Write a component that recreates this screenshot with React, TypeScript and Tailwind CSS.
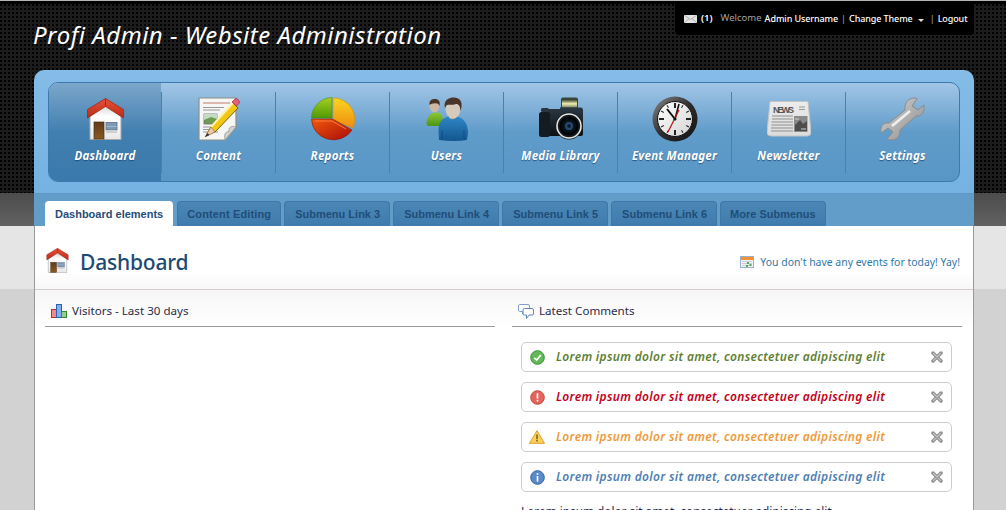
import type { ReactNode } from "react"

const trebuchet = "font-['Noto_Sans',sans-serif]"

function HouseIcon({ className }: { className?: string }) {
  return (
    <svg viewBox="0 0 37 42" className={className}>
      <defs>
        <linearGradient id="houseWall" x1="0" y1="0" x2="0" y2="1">
          <stop offset="0" stopColor="#cfcfcf" />
          <stop offset="0.35" stopColor="#ffffff" />
          <stop offset="1" stopColor="#e8e8e8" />
        </linearGradient>
        <linearGradient id="houseRoof" x1="0" y1="0" x2="0" y2="1">
          <stop offset="0" stopColor="#e8513a" />
          <stop offset="1" stopColor="#b92c16" />
        </linearGradient>
        <linearGradient id="houseDoor" x1="0" y1="0" x2="0" y2="1">
          <stop offset="0" stopColor="#5e3b1c" />
          <stop offset="1" stopColor="#8a5a24" />
        </linearGradient>
      </defs>
      <path d="M3 18 L18.5 6 L34 18 V41.5 H3 Z" fill="url(#houseWall)" stroke="#a8a8a8" />
      <rect x="7" y="24" width="10" height="17" fill="url(#houseDoor)" stroke="#4e3115" strokeWidth="0.7" />
      <rect x="19" y="24.5" width="11" height="7.5" fill="#7d99b8" stroke="#5c6f86" strokeWidth="0.8" />
      <rect x="19.5" y="28" width="10" height="0.8" fill="#aabcd0" />
      <rect x="19" y="32" width="11" height="3" fill="#cfcfcf" />
      <path d="M18.5 0.5 L36.5 11.5 V20 L18.5 8.5 L0.5 20 V11.5 Z" fill="url(#houseRoof)" stroke="#a02814" strokeWidth="0.8" />
      <path d="M18.5 0.5 V8.5" stroke="#97230f" strokeWidth="0.8" />
    </svg>
  )
}

function ContentIcon() {
  return (
    <svg viewBox="0 0 42 44" className="w-[42px] h-[44px]">
      <path d="M1 1 H38 V30 L27 43 H1 Z" fill="#f6f6f4" stroke="#8e8e88" strokeWidth="1.2" />
      <path d="M38 30 C33 28 30 31 31 35 C27 34 26 38 27 43 Z" fill="#d2d2ce" stroke="#9a9a94" strokeWidth="0.8" />
      <rect x="5" y="5" width="27" height="2" fill="#dcb9ae" />
      <path d="M5 10.5 H26 M5 13 H22 M5 30 H20 M5 32.5 H18 M5 35 H20" stroke="#8d8d8d" strokeWidth="0.9" />
      <rect x="6" y="17" width="13" height="10" fill="#6f9a52" stroke="#6e6e6e" strokeWidth="0.8" />
      <path d="M6 17 H19 V22 L13 20 L6 23 Z" fill="#c3dcc6" />
      <path d="M8 38.5 L13 30 L35 6 L40 11 L17 35 Z" fill="#f2c812" stroke="#7d5f08" strokeWidth="1" />
      <path d="M13 30 L35 6" stroke="#fff2a6" strokeWidth="2" />
      <path d="M7 40 L13 30 L17 35 Z" fill="#eec9a4" stroke="#8a6b50" strokeWidth="0.6" />
      <path d="M7 40 L9.5 36 L11.5 38 Z" fill="#333" />
      <path d="M34 5 L37 2 Q38 1 39.5 2 L41 4 Q42 5 41 6.5 L38.5 9 Z" fill="#e2607a" stroke="#a63a4e" strokeWidth="0.8" />
    </svg>
  )
}

function PieIcon() {
  return (
    <svg viewBox="0 0 44 44" className="w-[44px] h-[44px]">
      <defs>
        <linearGradient id="pieGreen" x1="0" y1="0" x2="0" y2="1">
          <stop offset="0" stopColor="#a8cf1e" />
          <stop offset="1" stopColor="#4f9a06" />
        </linearGradient>
        <linearGradient id="pieYellow" x1="0" y1="0" x2="0" y2="1">
          <stop offset="0" stopColor="#f9d520" />
          <stop offset="1" stopColor="#f08c10" />
        </linearGradient>
        <linearGradient id="pieRed" x1="0" y1="0" x2="1" y2="1">
          <stop offset="0" stopColor="#f2590c" />
          <stop offset="1" stopColor="#a80c08" />
        </linearGradient>
      </defs>
      <path d="M22 23 L22 1 A21.5 21.5 0 0 1 42 31 Z" fill="url(#pieYellow)" stroke="#d98a0c" strokeWidth="0.6" />
      <path d="M21 21 L21 0.5 A21 21 0 0 0 0.5 21 Z" fill="url(#pieGreen)" stroke="#4c8f0a" strokeWidth="0.6" />
      <path d="M0.5 22 H21.5 L41 33 A22 21.5 0 0 1 0.5 22 Z" fill="url(#pieRed)" stroke="#8e1508" strokeWidth="0.6" />
      <path d="M4 24 H21 L35 32" fill="none" stroke="#ff8a4a" strokeWidth="0.8" />
    </svg>
  )
}

function UsersIcon() {
  return (
    <svg viewBox="0 0 42 44" className="w-[42px] h-[44px]">
      <defs>
        <linearGradient id="userBlue" x1="0" y1="0" x2="0" y2="1">
          <stop offset="0" stopColor="#2f86c6" />
          <stop offset="1" stopColor="#12568f" />
        </linearGradient>
        <linearGradient id="userGreen" x1="0" y1="0" x2="0" y2="1">
          <stop offset="0" stopColor="#8ec63a" />
          <stop offset="1" stopColor="#4a9612" />
        </linearGradient>
      </defs>
      <path d="M0.5 27 C0.5 19 5 16 8 15.5 L12 15.5 C15 16 17 19 17 24 L14 29 H3 Q0.5 29 0.5 27 Z" fill="url(#userGreen)" />
      <ellipse cx="8.5" cy="9" rx="5" ry="6.5" fill="#cbb8a6" />
      <path d="M3.5 8 C3 3 6 2 9 2 C12.5 2 14.5 4 13.5 9 C12.5 6 10 6 8 6.5 C6 6.5 5 7 3.5 8 Z" fill="#4b3426" />
      <path d="M13 43 L12.5 34 C12.5 24 17 21 22 19.5 L31 19.5 C37 21 42 26 42 36 L41 43 Q28 45 13 43 Z" fill="url(#userBlue)" />
      <path d="M23 17 L23 21 Q27 24 31 20 L31 15 Z" fill="#b5a595" />
      <ellipse cx="27" cy="12" rx="7.5" ry="9.5" fill="#d6cabc" />
      <path d="M19 11 C17 3 23 0.5 28 0.5 C33 0.5 36.5 4 35.5 10 L34.5 14 C34 9 33 7 30 7 C26 8.5 22 7 20.5 8.5 Z" fill="#4a352a" />
      <path d="M16 43 L16 33 M38 43 L38 33" stroke="#0e4a7c" strokeWidth="0.8" />
    </svg>
  )
}

function CameraIcon() {
  return (
    <svg viewBox="0 0 44 44" className="w-[44px] h-[44px]">
      <defs>
        <linearGradient id="camBody" x1="0" y1="0" x2="0" y2="1">
          <stop offset="0" stopColor="#2a3842" />
          <stop offset="1" stopColor="#0c1116" />
        </linearGradient>
        <radialGradient id="camLens" cx="0.5" cy="0.5" r="0.5">
          <stop offset="0" stopColor="#22405e" />
          <stop offset="0.45" stopColor="#0b1620" />
          <stop offset="1" stopColor="#000" />
        </radialGradient>
        <linearGradient id="camFlash" x1="0" y1="0" x2="0" y2="1">
          <stop offset="0" stopColor="#4a5034" />
          <stop offset="0.5" stopColor="#f1eeb2" />
          <stop offset="1" stopColor="#7d8260" />
        </linearGradient>
      </defs>
      <path d="M22 11 L22 2 Q22 0.5 24 0.5 H37 Q39 0.5 39 2 L39 11 Z" fill="#39463f" />
      <rect x="23" y="3" width="15" height="7.5" fill="url(#camFlash)" />
      <path d="M8 14 Q8 12 10 12 H21 V10.5 H42 Q44 10.5 44 13 V37 Q44 39 42 39 H8 Z" fill="url(#camBody)" />
      <rect x="0" y="15" width="11" height="25" rx="2.5" fill="#141b21" />
      <rect x="2" y="11" width="8" height="4" rx="1.5" fill="#2a3540" />
      <circle cx="30" cy="29" r="13.5" fill="#161b1f" />
      <circle cx="30" cy="29" r="12" fill="none" stroke="#e6e6e6" strokeWidth="1.6" />
      <circle cx="30" cy="29" r="9.5" fill="url(#camLens)" />
      <circle cx="30" cy="29" r="4" fill="#234a70" />
      <circle cx="30" cy="29" r="1.8" fill="#0a1622" />
    </svg>
  )
}

function ClockIcon() {
  const ticks = [0, 30, 60, 90, 120, 150, 180, 210, 240, 270, 300, 330]
  return (
    <svg viewBox="0 0 46 46" className="w-[46px] h-[46px]">
      <defs>
        <linearGradient id="clockRing" x1="0" y1="0" x2="1" y2="1">
          <stop offset="0" stopColor="#8a8a8a" />
          <stop offset="0.5" stopColor="#2e2e2e" />
          <stop offset="1" stopColor="#111" />
        </linearGradient>
        <linearGradient id="clockFace" x1="0" y1="0" x2="1" y2="1">
          <stop offset="0" stopColor="#ffffff" />
          <stop offset="1" stopColor="#d4d4d4" />
        </linearGradient>
      </defs>
      <circle cx="23" cy="23" r="22.5" fill="url(#clockRing)" />
      <circle cx="23" cy="23" r="17.5" fill="url(#clockFace)" stroke="#111" />
      {ticks.map((t) => (
        <rect
          key={t}
          x={t % 90 === 0 ? 22 : 22.5}
          y="7"
          width={t % 90 === 0 ? 2 : 1}
          height={t % 90 === 0 ? 5 : 3}
          fill="#222"
          transform={`rotate(${t} 23 23)`}
        />
      ))}
      <path d="M23 23 L15 13" stroke="#111" strokeWidth="2" />
      <path d="M23 23 L27 8" stroke="#111" strokeWidth="1.6" />
      <path d="M27 14 L16 36" stroke="#c01818" strokeWidth="1.2" />
      <circle cx="23" cy="23" r="1.6" fill="#111" />
    </svg>
  )
}

function NewsIcon() {
  return (
    <svg viewBox="0 0 44 36" className="w-[44px] h-[36px]">
      <defs>
        <linearGradient id="newsPaper" x1="0" y1="0" x2="0" y2="1">
          <stop offset="0" stopColor="#ececec" />
          <stop offset="1" stopColor="#dcdcdc" />
        </linearGradient>
      </defs>
      <path d="M3 1 Q3 0.5 4 0.5 H40 Q41 0.5 41 1 L44 31 Q44 35 40 35 H4 Q0 35 0 31 Z" fill="url(#newsPaper)" stroke="#c4c4c4" />
      <text x="6" y="11.5" fontSize="9" fontWeight="700" fontFamily="'Liberation Sans',sans-serif" fill="#555" textLength="21">
        NEWS
      </text>
      <path d="M32 6 H38 M32 8.5 H38" stroke="#999" />
      <path d="M5 15 H26 M5 18 H26 M4.5 21 H26 M4.5 24 H26 M4 27 H26 M4 30 H26" stroke="#8f8f8f" />
      <rect x="27" y="15" width="13.5" height="16" fill="#8a8a8a" />
      <path d="M28 24 L33 19 L36 23 L40 20 V30 H28 Z" fill="#4d4d4d" />
      <path d="M28 18 H32 M34 28 H39" stroke="#cfcfcf" />
    </svg>
  )
}

function WrenchIcon() {
  return (
    <svg viewBox="0 0 45 44" className="w-[45px] h-[44px]">
      <defs>
        <linearGradient id="wrenchMetal" x1="0" y1="0" x2="1" y2="1">
          <stop offset="0" stopColor="#d6d6d6" />
          <stop offset="1" stopColor="#8c8c8c" />
        </linearGradient>
      </defs>
      <path
        d="M35 1 C28 1 24 6 25 13 L9 26 C3 25 0 30 1 36 L8 31 L13 35 L7 42 C14 45 21 41 20 33 L36 19 C41 20 45 15 44 8 L38 13 L32 9 L37 2 Z"
        fill="url(#wrenchMetal)"
        stroke="#8a8a8a"
      />
      <path d="M12 29 L30 14" stroke="#efefef" strokeWidth="2.5" />
    </svg>
  )
}

function MailIcon() {
  return (
    <svg viewBox="0 0 13 8" className="w-[13px] h-[8px] mr-[4px] shrink-0">
      <rect width="13" height="8" fill="#e4e4e4" />
      <path d="M0 0 L6.5 4.5 L13 0 M0 8 L5 3.5 M13 8 L8 3.5" stroke="#9a9a9a" strokeWidth="0.7" fill="none" />
    </svg>
  )
}

function BarsIcon() {
  return (
    <svg viewBox="0 0 16 14" className="w-[16px] h-[14px]">
      <rect x="0.5" y="5.5" width="5" height="8" fill="#f08a8a" stroke="#c02c2c" />
      <rect x="5.5" y="0.5" width="5" height="13" fill="#7fb0ea" stroke="#2b5fb8" />
      <rect x="10.5" y="7.5" width="5" height="6" fill="#92cc8e" stroke="#2f8a34" />
    </svg>
  )
}

function CommentsIcon() {
  return (
    <svg viewBox="0 0 16 15" className="w-[16px] h-[15px]">
      <path d="M1.5 0.5 H10 Q11.5 0.5 11.5 2 V6 Q11.5 7.5 10 7.5 H6 L4.5 10 V7.5 H1.5 Q0.5 7.5 0.5 6 V2 Q0.5 0.5 1.5 0.5 Z" fill="#fff" stroke="#7f9fc4" />
      <path d="M6.5 4.5 H14 Q15.5 4.5 15.5 6 V10 Q15.5 11 14 11 H11 L8.5 14.5 V11 H6.5 Q5 11 5 10 V6 Q5 4.5 6.5 4.5 Z" fill="#fff" stroke="#5f88b8" />
    </svg>
  )
}

function CalendarIcon() {
  return (
    <svg viewBox="0 0 14 12" className="w-[14px] h-[12px]">
      <rect x="0.5" y="0.5" width="13" height="11" fill="#f4f4f4" stroke="#9ab0c8" />
      <rect x="1" y="1" width="12" height="3" fill="#f09038" />
      <path d="M2 5.5 H12 M2 7.5 H12 M2 9.5 H12" stroke="#c4ccd4" />
      <rect x="7" y="6" width="2" height="2" fill="#57a85a" />
      <rect x="9.5" y="8" width="2" height="2" fill="#57a85a" />
      <rect x="6" y="9" width="2" height="2" fill="#57a85a" />
    </svg>
  )
}

function CloseIcon() {
  return (
    <svg viewBox="0 0 12 12" className="w-[12px] h-[12px]">
      <path d="M2 2 L10 10 M10 2 L2 10" stroke="#8e8e8e" strokeWidth="3.4" strokeLinecap="round" />
      <path d="M2.5 2.5 L9.5 9.5 M9.5 2.5 L2.5 9.5" stroke="#c4c4c4" strokeWidth="1.2" strokeLinecap="round" />
    </svg>
  )
}

function StatusIcon({ kind }: { kind: string }) {
  if (kind === "warning") {
    return (
      <svg viewBox="0 0 16 14" className="w-[16px] h-[14px]">
        <path d="M8 0.7 L15.5 13.3 H0.5 Z" fill="#f7d35e" stroke="#e09a22" strokeLinejoin="round" />
        <rect x="7.2" y="4.5" width="1.6" height="4.8" fill="#8a6414" />
        <rect x="7.2" y="10" width="1.6" height="1.6" fill="#8a6414" />
      </svg>
    )
  }
  const fill = kind === "success" ? "#62b958" : kind === "error" ? "#e2665c" : "#5c8cc8"
  const ring = kind === "success" ? "#3a8f36" : kind === "error" ? "#c04a40" : "#35649e"
  return (
    <svg viewBox="0 0 15 15" className="w-[15px] h-[15px]">
      <circle cx="7.5" cy="7.5" r="6.8" fill={fill} stroke={ring} />
      {kind === "success" && <path d="M4.2 7.8 L6.6 10 L10.8 5.2" fill="none" stroke="#fff" strokeWidth="1.8" />}
      {kind === "error" && (
        <>
          <rect x="6.7" y="3.2" width="1.6" height="5.5" fill="#fff" />
          <rect x="6.7" y="9.8" width="1.6" height="1.7" fill="#fff" />
        </>
      )}
      {kind === "info" && (
        <>
          <rect x="6.7" y="3.2" width="1.6" height="1.7" fill="#fff" />
          <rect x="6.7" y="6" width="1.6" height="5.5" fill="#fff" />
        </>
      )}
    </svg>
  )
}

const navItems: { label: string; icon: ReactNode }[] = [
  { label: "Dashboard", icon: <HouseIcon className="w-[37px] h-[42px]" /> },
  { label: "Content", icon: <ContentIcon /> },
  { label: "Reports", icon: <PieIcon /> },
  { label: "Users", icon: <UsersIcon /> },
  { label: "Media Library", icon: <CameraIcon /> },
  { label: "Event Manager", icon: <ClockIcon /> },
  { label: "Newsletter", icon: <NewsIcon /> },
  { label: "Settings", icon: <WrenchIcon /> },
]

const tabs = [
  { label: "Content Editing", spacing: "pl-[9px] tracking-[0.14px]" },
  { label: "Submenu Link 3", spacing: "pl-[10px]" },
  { label: "Submenu Link 4", spacing: "pl-[10px]" },
  { label: "Submenu Link 5", spacing: "pl-[10px]" },
  { label: "Submenu Link 6", spacing: "pl-[10px]" },
  { label: "More Submenus", spacing: "pl-[9px]" },
]

const notices = [
  { kind: "success", color: "text-[#5f7f33]" },
  { kind: "error", color: "text-[#c4001a]" },
  { kind: "warning", color: "text-[#ee9a3c]" },
  { kind: "info", color: "text-[#4f80b4]" },
]

function PanelHeading({ icon, title }: { icon: ReactNode; title: string }) {
  return (
    <div className="h-[37px] pt-[6px] flex items-center gap-[5px] px-[6px] border-b border-[#999]">
      {icon}
      <span className={`${trebuchet} text-[11.6px] text-[#2b2b4a]`}>{title}</span>
    </div>
  )
}

export default function App() {
  return (
    <div className="relative h-[510px] w-[1006px] overflow-hidden">
      {/* page background bands, the panel sits on top of them */}
      <div className="absolute inset-0 flex flex-col">
        <div className="h-px bg-[#b4b4b4]" />
        <div className="h-[3px] bg-black" />
        <div className="h-[189px] bg-[#1c1c1c] bg-[radial-gradient(circle_at_1px_1px,#000_1px,transparent_1px)] bg-[length:4px_4px]" />
        <div className="h-[33px] bg-gradient-to-b from-[#4c4c4c] to-[#626262]" />
        <div className="h-[63px] bg-[#e5e5e5]" />
        <div className="flex-1 bg-[#d2d2d2]" />
      </div>

      <div className="relative w-[940px] ml-[34px]">
        <header className="h-[70px] flex justify-between items-start">
          <h1 className={`${trebuchet} italic text-[24px] leading-[32px] tracking-[0.5px] text-white mt-[19px] -ml-px`}>
            Profi Admin - Website Administration
          </h1>
          <div className={`${trebuchet} mt-[4px] h-[31px] pb-[2px] w-[299px] shrink-0 bg-black rounded-b-[4px] flex items-center pl-[9px] text-[9px] text-white whitespace-nowrap`}>
            <MailIcon />
            <span className="font-semibold text-[9.5px]">(1)</span>
            <span className="ml-[8px] text-[#a0a0a0] text-[9.5px]">Welcome</span>
            <span className="ml-[3px] font-medium tracking-[-0.1px]">Admin Username</span>
            <span className="mx-[3px] text-[#aaa]">|</span>
            <span className="font-medium tracking-[-0.1px]">Change Theme</span>
            <span className="ml-[5px] mt-[3px] border-x-[3px] border-t-[3px] border-x-transparent border-t-[#ddd]" />
            <span className="ml-[6px] mr-[3px] text-[#aaa]">|</span>
            <span className="font-medium tracking-[-0.1px]">Logout</span>
          </div>
        </header>

        <div className="rounded-t-[10px] bg-gradient-to-b from-[#85bce8] to-[#70afe0]">
          <div className="pt-[12px] px-[14px] pb-[11px]">
            <nav className="h-[100px] rounded-[10px] border border-[#3c79ae] bg-gradient-to-b from-[#a2c6e6] via-[#609cca] via-50% to-[#5896c6] flex overflow-hidden">
              {navItems.map((item, i) => (
                <div key={item.label} className="contents">
                  <a
                    className={`${i === 0 ? "w-[112px] bg-gradient-to-b from-[#7ba7cb] via-[#417fb0] via-50% to-[#3a79ab]" : "w-[113px]"} shrink-0 pt-[14px] flex flex-col items-center`}
                  >
                    <span className="h-[44px] flex items-center justify-center">{item.icon}</span>
                    <span className={`${trebuchet} mt-[7px] text-[11.5px] leading-[16px] font-bold italic tracking-[0.25px] text-white [text-shadow:0_1px_1px_rgba(20,60,100,0.7)] whitespace-nowrap`}>
                      {item.label}
                    </span>
                  </a>
                  {i < navItems.length - 1 && <span className="w-px h-[81px] self-center shrink-0 bg-[#4382b3]" />}
                </div>
              ))}
            </nav>
          </div>

          <div className="h-[33px] bg-[#629dca] border-t border-[#5c98c6] pl-[11px] flex items-end gap-[3px]">
            <a className="h-[25px] mr-px pt-px px-[10px] rounded-t-[4px] bg-white flex items-center font-['Liberation_Sans',sans-serif] text-[11px] font-bold text-[#274d76]">
              Dashboard elements
            </a>
            {tabs.map((t) => (
              <a
                key={t.label}
                className={`${t.spacing} h-[25px] pr-[9px] rounded-t-[4px] border border-b-0 border-[#3f78a8] bg-gradient-to-b from-[#4a87b7] to-[#3f7cad] flex items-center font-['Liberation_Sans',sans-serif] text-[11px] font-bold text-[#214d78]`}
              >
                {t.label}
              </a>
            ))}
          </div>
        </div>

        <main className="bg-white border-x border-[#999] h-[300px]">
          <div className="h-[64px] pl-[11px] pr-[13px] border-b border-[#d4ccd0] bg-gradient-to-b from-white via-white via-70% to-[#f8f8f8] flex items-center justify-between">
            <div className="flex items-center gap-[11px] mt-[10px]">
              <HouseIcon className="w-[23px] h-[25px] -mt-[5px]" />
              <h2 className={`${trebuchet} text-[21px] tracking-[-0.2px] font-medium text-[#1d4a73]`}>Dashboard</h2>
            </div>
            <div className={`${trebuchet} flex items-center gap-[6px] mt-[10px] text-[10.45px] text-[#2f78a8]`}>
              <CalendarIcon />
              <span>You don't have any events for today! Yay!</span>
            </div>
          </div>

          <div className="bg-gradient-to-b from-[#f6f6f6] to-white bg-no-repeat bg-[length:100%_37px]">
            <div className="grid grid-cols-[450px_450px] gap-x-[17px] pl-[10px]">
              <section>
                <PanelHeading icon={<BarsIcon />} title="Visitors - Last 30 days" />
              </section>
              <section>
                <PanelHeading icon={<CommentsIcon />} title="Latest Comments" />
                <div className="mt-[15px] ml-[9px] w-[431px] flex flex-col gap-[10px]">
                  {notices.map((n) => (
                    <div
                      key={n.kind}
                      className="h-[30px] rounded-[5px] border border-[#cccccc] bg-white flex items-center pl-[7px] pr-[8px]"
                    >
                      <span className="w-[16px] flex justify-center">
                        <StatusIcon kind={n.kind} />
                      </span>
                      <span className={`${trebuchet} ${n.color} ml-[11px] flex-1 text-[12px] font-semibold italic tracking-[0.32px] whitespace-nowrap`}>
                        Lorem ipsum dolor sit amet, consectetuer adipiscing elit
                      </span>
                      <CloseIcon />
                    </div>
                  ))}
                  <p className={`${trebuchet} mt-px text-[11.8px] text-[#1e2a5a] whitespace-nowrap`}>
                    Lorem ipsum dolor sit amet, consectetuer adipiscing elit
                  </p>
                </div>
              </section>
            </div>
          </div>
        </main>
      </div>
    </div>
  )
}
